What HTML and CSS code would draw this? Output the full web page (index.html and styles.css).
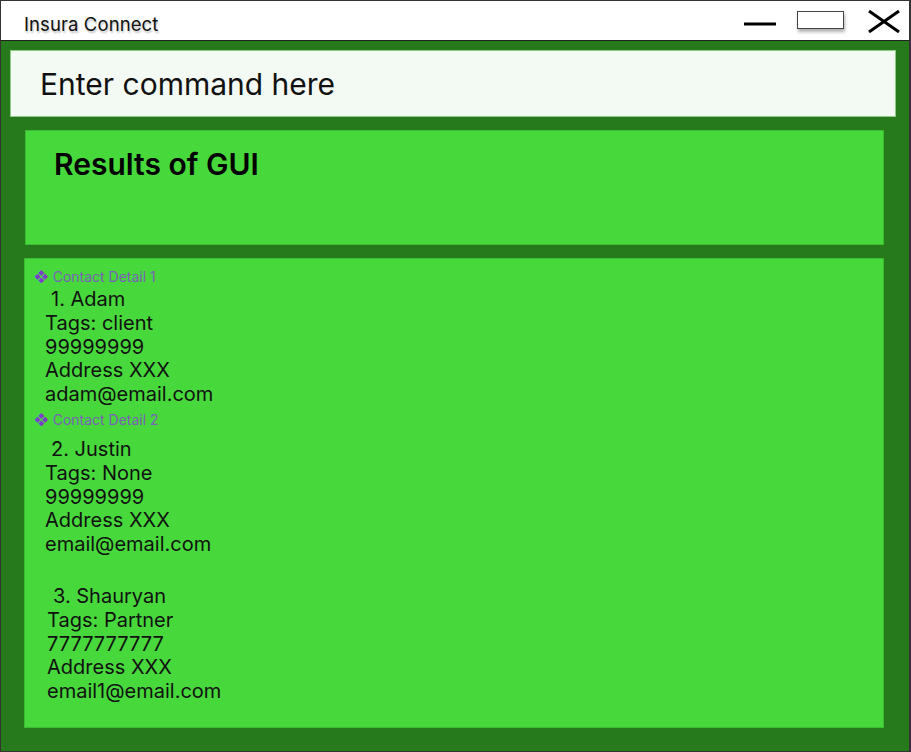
FILE: index.html
```html
<!DOCTYPE html>
<html>
<head>
<meta charset="utf-8">
<link rel="stylesheet" href="styles.css">
</head>
<body>
<div class="window">
  <div class="titlebar">
    <span class="title">Insura Connect</span>
    <div class="controls">
      <svg class="ctl-min" width="32" height="6" viewBox="0 0 32 6"><line x1="0" y1="3" x2="32" y2="3" stroke="#000" stroke-width="3"/></svg>
      <div class="ctl-max"></div>
      <svg class="ctl-close" width="32" height="23" viewBox="0 0 32 23"><path d="M1 1 L31 22 M31 1 L1 22" stroke="#000" stroke-width="3" fill="none"/></svg>
    </div>
  </div>
  <div class="main">
    <div class="command">Enter command here</div>
    <div class="results"><h1>Results of GUI</h1></div>
    <div class="list">
      <div class="label"><span class="diamond">❖</span> Contact Detail 1</div>
      <div class="contact c1">
        <div class="name">1. Adam</div>
        <div>Tags: client</div>
        <div>99999999</div>
        <div>Address XXX</div>
        <div>adam@email.com</div>
      </div>
      <div class="label l2"><span class="diamond">❖</span> Contact Detail 2</div>
      <div class="contact c2">
        <div class="name">2. Justin</div>
        <div>Tags: None</div>
        <div>99999999</div>
        <div>Address XXX</div>
        <div>email@email.com</div>
      </div>
      <div class="contact c3">
        <div class="name">3. Shauryan</div>
        <div>Tags: Partner</div>
        <div>7777777777</div>
        <div>Address XXX</div>
        <div>email1@email.com</div>
      </div>
    </div>
  </div>
</div>
</body>
</html>
```

FILE: styles.css
```css
html, body {
  margin: 0;
  padding: 0;
  background: #ffffff;
}
body {
  font-family: Inter, "Liberation Sans", sans-serif;
  width: 911px;
  height: 752px;
  overflow: hidden;
}
.window {
  box-sizing: border-box;
  width: 911px;
  height: 752px;
  border: 1px solid #333;
  border-right-width: 2px;
  display: flex;
  flex-direction: column;
}
.titlebar {
  height: 39px;
  flex: none;
  display: flex;
  align-items: center;
  justify-content: space-between;
  background: #fff;
  border-bottom: 1px solid #222;
}
.title {
  margin-left: 23px;
  margin-top: 6px;
  font-size: 18.5px;
  letter-spacing: 0.1px;
  color: #111;
  text-shadow: 1px 2px 2px rgba(0,0,0,0.25);
}
.controls {
  display: flex;
  align-items: center;
  margin-right: 9px;
  margin-top: 4px;
}
.ctl-min { margin-right: 21px; margin-top: 3px; }
.ctl-max {
  width: 45px;
  height: 16px;
  border: 1px solid #444;
  box-shadow: 1px 3px 3px rgba(0,0,0,0.3);
  margin-right: 24px;
  margin-top: -6px;
  background: #fff;
}
.ctl-close { margin-top: -2px; }
.main {
  flex: 1;
  background: #267a1c;
  padding: 9px 13px 0 9px;
  display: flex;
  flex-direction: column;
}
.command {
  height: 64px;
  flex: none;
  background: #f3f9f3;
  border: 1px solid #8ccf84;
  font-size: 30px;
  display: flex;
  align-items: center;
  padding-left: 29px;
  padding-top: 1px;
  color: #111;
}
.results {
  margin: 13px 12px 0 15px;
  height: 115px;
  flex: none;
  background: #47d83b;
  border: 1px solid #3cbb32;
  box-sizing: border-box;
}
.results h1 {
  margin: 15px 0 0 28px;
  font-size: 30px;
  font-weight: 600;
  color: #000;
}
.list {
  margin: 13px 12px 0 14px;
  height: 470px;
  flex: none;
  box-sizing: border-box;
  background: #47d83b;
  border: 1px solid #3cbb32;
  padding-top: 9px;
}
.label {
  font-size: 14px;
  color: #7a62b8;
  padding-left: 9px;
  line-height: 17px;
}
.diamond {
  color: #7d3ccf;
  font-size: 14px;
}
.contact {
  font-size: 20px;
  line-height: 23.8px;
  color: #111;
  padding-left: 20px;
}
.contact .name { padding-left: 6px; }
.contact.c1 { margin-top: 3px; }
.label.l2 { margin-top: 4px; }
.contact.c2 { margin-top: 10px; }
.contact.c3 { margin-top: 28px; padding-left: 22px; }
```
